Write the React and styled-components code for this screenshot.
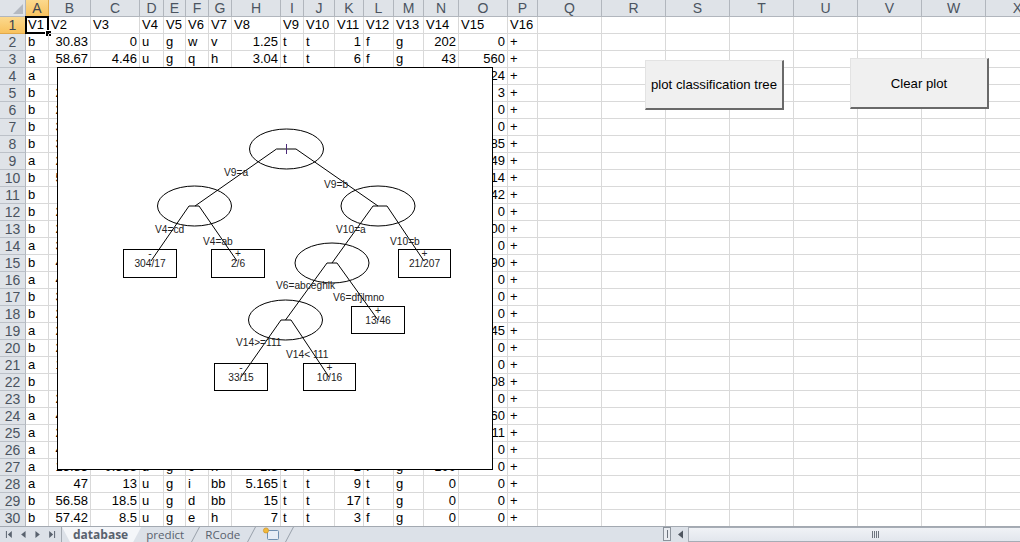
import React from "react";
import styled, { createGlobalStyle } from "styled-components";

const COLUMNS = [
  ["A", 23], ["B", 42], ["C", 49], ["D", 24], ["E", 22], ["F", 23], ["G", 23], ["H", 49],
  ["I", 23], ["J", 31], ["K", 29], ["L", 30], ["M", 30], ["N", 35], ["O", 49], ["P", 30],
  ["Q", 64], ["R", 64], ["S", 64], ["T", 64], ["U", 64], ["V", 64], ["W", 64], ["X", 64],
];

const NUMERIC = [1, 2, 7, 10, 13, 14];

const DATA = `V1,V2,V3,V4,V5,V6,V7,V8,V9,V10,V11,V12,V13,V14,V15,V16
b,30.83,0,u,g,w,v,1.25,t,t,1,f,g,202,0,+
a,58.67,4.46,u,g,q,h,3.04,t,t,6,f,g,43,560,+
a,24.5,0.5,u,g,q,h,1.5,t,f,0,f,g,280,824,+
b,27.83,1.54,u,g,w,v,3.75,t,t,5,t,g,100,3,+
b,20.17,5.625,u,g,w,v,1.71,t,f,0,f,s,120,0,+
b,32.08,4,u,g,m,v,2.5,t,f,0,t,g,360,0,+
b,33.17,1.04,u,g,r,h,6.5,t,f,0,t,g,164,31285,+
a,22.92,11.585,u,g,cc,v,0.04,t,f,0,f,g,80,1349,+
b,54.42,0.5,y,p,k,h,3.96,t,f,0,f,g,180,314,+
b,42.5,4.915,y,p,w,v,3.165,t,f,0,t,g,52,1442,+
b,22.08,0.83,u,g,c,h,2.165,f,f,0,t,g,128,0,+
b,29.92,1.835,u,g,c,h,4.335,t,f,0,f,g,260,200,+
a,38.25,6,u,g,k,v,1,t,f,0,t,g,0,0,+
b,48.08,6.04,u,g,k,v,0.04,f,f,0,f,g,0,2690,+
a,45.83,10.5,u,g,q,v,5,t,t,7,t,g,0,0,+
b,36.67,4.415,y,p,k,v,0.25,t,t,10,t,g,320,0,+
b,28.25,0.875,u,g,m,v,0.96,t,t,3,t,g,396,0,+
a,23.25,5.875,u,g,q,v,3.17,t,t,10,f,g,120,245,+
b,21.83,0.25,u,g,d,h,0.665,t,f,0,t,g,0,0,+
a,19.17,8.585,u,g,cc,h,0.75,t,t,7,f,g,96,0,+
b,25,11.25,u,g,c,v,2.5,t,t,17,f,g,200,1208,+
b,23.25,1,u,g,c,v,0.835,t,f,0,f,s,300,0,+
a,47.75,8,u,g,c,v,7.875,t,t,6,t,g,0,1260,+
a,27.42,14.5,u,g,x,h,3.085,t,t,1,f,g,120,11,+
a,41.17,6.5,u,g,q,v,0.5,t,t,3,t,g,145,0,+
a,15.83,0.585,u,g,c,h,1.5,t,t,2,f,g,100,0,+
a,47,13,u,g,i,bb,5.165,t,t,9,t,g,0,0,+
b,56.58,18.5,u,g,d,bb,15,t,t,17,t,g,0,0,+
b,57.42,8.5,u,g,e,h,7,t,t,3,f,g,0,0,+`
  .split("\n")
  .map((line) => line.split(","));

const NODES = [
  [286.5, 149],
  [194.5, 206],
  [378, 206],
  [332, 263],
  [285.5, 320],
];

const EDGES = [
  "M195 206 L276.5 149 L296 149 L378 206",
  "M151 261 L189 206 L199 206 L237 261",
  "M332 263 L373 206 L387 206 L424 261",
  "M285.5 320 L327 263 L337 263 L378 320",
  "M241 377 L281 320 L291 320 L329 377",
];

const LEAVES = [
  { x: 123.5, y: 249.5, w: 53, h: 28, sign: "-", text: "304/17" },
  { x: 211.5, y: 249.5, w: 53, h: 28, sign: "+", text: "2/6" },
  { x: 398.5, y: 249.5, w: 52, h: 28, sign: "+", text: "21/207" },
  { x: 351.5, y: 306.5, w: 53, h: 27, sign: "+", text: "13/46" },
  { x: 214.5, y: 363.5, w: 53, h: 27, sign: "-", text: "33/15" },
  { x: 303.5, y: 363.5, w: 52, h: 27, sign: "+", text: "10/16" },
];

const SPLITS = [
  { x: 224, y: 176, text: "V9=a" },
  { x: 324, y: 188, text: "V9=b" },
  { x: 155, y: 233, text: "V4=cd" },
  { x: 203, y: 245, text: "V4=ab" },
  { x: 336, y: 233, text: "V10=a" },
  { x: 390, y: 245, text: "V10=b" },
  { x: 276, y: 289, text: "V6=abceghik" },
  { x: 333, y: 301, text: "V6=dfjlmno" },
  { x: 236, y: 346, text: "V14>=111" },
  { x: 286, y: 358, text: "V14< 111" },
];

const App = () => {
  return (
    <Window>
      <GlobalStyle />
      <Sheet>
        <Corner>
          <svg width="12" height="12" viewBox="0 0 12 12">
            <path d="M11 1 V11 H1 Z" fill="#b4b9c1" />
          </svg>
        </Corner>
        {COLUMNS.map(([name], i) => (
          <ColHeader key={name} $active={i === 0}>
            {name}
          </ColHeader>
        ))}
        {DATA.map((row, r) => (
          <React.Fragment key={r}>
            <RowHeader $active={r === 0}>{r + 1}</RowHeader>
            {COLUMNS.map(([name], c) => (
              <Cell key={name} $right={r > 0 && NUMERIC.includes(c)}>
                {row[c]}
                {r === 0 && c === 0 && <Selection />}
              </Cell>
            ))}
          </React.Fragment>
        ))}

        <Plot>
          <svg width="434" height="401" viewBox="58 68 434 401">
            <g fill="none" stroke="#000" strokeWidth="1">
              {NODES.map(([cx, cy]) => (
                <ellipse key={cx + "-" + cy} cx={cx} cy={cy} rx="37" ry="20" />
              ))}
              {EDGES.map((d) => (
                <path key={d} d={d} />
              ))}
              {LEAVES.map((l) => (
                <rect key={l.text} x={l.x} y={l.y} width={l.w} height={l.h} />
              ))}
              <path d="M286.5 144 V154" stroke="#4b2a78" />
            </g>
            <PlotText>
              {SPLITS.map((s) => (
                <text key={s.text} x={s.x} y={s.y}>
                  {s.text}
                </text>
              ))}
              {LEAVES.map((l) => (
                <g key={l.text} textAnchor="middle">
                  <text x={l.x + l.w / 2} y={l.y + 7.5}>
                    {l.sign}
                  </text>
                  <text x={l.x + l.w / 2} y={l.y + 17.5}>
                    {l.text}
                  </text>
                </g>
              ))}
            </PlotText>
          </svg>
        </Plot>

        <SheetButton $left={645} $top={60} $width={139} $height={50}>
          plot classification tree
        </SheetButton>
        <SheetButton $left={850} $top={58} $width={139} $height={51}>
          Clear plot
        </SheetButton>
      </Sheet>

      <StatusBar>
        <TabNav>
          <svg width="62" height="15" viewBox="0 0 62 15" fill="#59626e">
            <path d="M6 4 H7 V11 H6 Z M12 4 V11 L8 7.5 Z" />
            <path d="M26 4 V11 L21.5 7.5 Z" />
            <path d="M36 4 V11 L40.5 7.5 Z" />
            <path d="M50 4 V11 L54 7.5 Z M55 4 H56 V11 H55 Z" />
          </svg>
        </TabNav>
        <ActiveTab>database</ActiveTab>
        <Tab>predict</Tab>
        <Tab>RCode</Tab>
        <NewTab>
          <svg width="20" height="15" viewBox="0 0 20 15">
            <rect x="6.5" y="3.5" width="11" height="9" rx="1" fill="#e6edf6" stroke="#6f8fb0" />
            <circle cx="5" cy="3.5" r="2.6" fill="#f0b93c" stroke="#c98a1c" strokeWidth="0.6" />
          </svg>
        </NewTab>
        <Spacer />
        <SplitHandle />
        <ScrollArrow>
          <svg width="8" height="9" viewBox="0 0 8 9">
            <path d="M6 0.5 V8.5 L1 4.5 Z" fill="#4f5660" />
          </svg>
        </ScrollArrow>
        <ScrollThumb>
          <Grip />
        </ScrollThumb>
      </StatusBar>
    </Window>
  );
};

const GlobalStyle = createGlobalStyle`
  html, body {
    margin: 0;
    padding: 0;
    background: #fff;
  }
`;

const Window = styled.div`
  width: 1020px;
  height: 542px;
  overflow: hidden;
  display: flex;
  flex-direction: column;
  font-family: "Liberation Sans", Arial, sans-serif;
`;

const Sheet = styled.div`
  position: relative;
  height: 526px;
  overflow: hidden;
  display: grid;
  grid-template-columns: 26px ${COLUMNS.map(([, w]) => w + "px").join(" ")};
  grid-auto-rows: 17px;
  align-content: start;
`;

const Corner = styled.div`
  background: #dfe3e8;
  border-right: 1px solid #b1b6bd;
  border-bottom: 1px solid #b1b6bd;
  display: flex;
  align-items: flex-end;
  justify-content: flex-end;
  box-sizing: border-box;
  padding: 0 1px 1px 0;
`;

const ColHeader = styled.div`
  box-sizing: border-box;
  border-right: 1px solid ${(p) => (p.$active ? "#e1a94a" : "#b1b6bd")};
  border-bottom: 1px solid ${(p) => (p.$active ? "#e1a94a" : "#b1b6bd")};
  background: ${(p) =>
    p.$active ? "linear-gradient(#fbd98e, #f8c25e)" : "#dfe3e8"};
  color: ${(p) => (p.$active ? "#3f4650" : "#4b5460")};
  font-size: 14px;
  line-height: 16px;
  text-align: center;
`;

const RowHeader = styled.div`
  box-sizing: border-box;
  border-right: 1px solid ${(p) => (p.$active ? "#e1a94a" : "#b1b6bd")};
  border-bottom: 1px solid ${(p) => (p.$active ? "#e1a94a" : "#bcc1c8")};
  background: ${(p) =>
    p.$active ? "linear-gradient(#fbd98e, #f8c25e)" : "#dfe3e8"};
  color: ${(p) => (p.$active ? "#3f4650" : "#4b5460")};
  font-size: 14px;
  line-height: 17px;
  text-align: center;
`;

const Cell = styled.div`
  position: relative;
  box-sizing: border-box;
  border-right: 1px solid #d9d9d9;
  border-bottom: 1px solid #d9d9d9;
  padding: 0 2px;
  color: #000;
  font-size: 13px;
  line-height: 16px;
  white-space: nowrap;
  text-align: ${(p) => (p.$right ? "right" : "left")};
`;

const Selection = styled.span`
  position: absolute;
  left: -1px;
  top: -1px;
  width: 20px;
  height: 14px;
  border: 2px solid #000;
  pointer-events: none;

  &::after {
    content: "";
    position: absolute;
    right: -4px;
    bottom: -4px;
    width: 5px;
    height: 5px;
    background: #000;
    border-left: 1px solid #fff;
    border-top: 1px solid #fff;
  }
`;

const Plot = styled.div`
  position: absolute;
  left: 57px;
  top: 67px;
  width: 434px;
  height: 401px;
  background: #fff;
  border: 1.5px solid #000;
  display: flex;
`;

const PlotText = styled.g`
  font-family: "Liberation Sans", Arial, sans-serif;
  font-size: 10.2px;
  fill: #222;
`;

const SheetButton = styled.div`
  position: absolute;
  left: ${(p) => p.$left}px;
  top: ${(p) => p.$top}px;
  width: ${(p) => p.$width}px;
  height: ${(p) => p.$height}px;
  box-sizing: border-box;
  display: flex;
  align-items: center;
  justify-content: center;
  background: #f0f0f0;
  border-style: solid;
  border-width: 1px 2px 2px 1px;
  border-color: #e3e3e3 #696969 #696969 #e3e3e3;
  color: #000;
  font-size: 13.2px;
`;

const StatusBar = styled.div`
  height: 16px;
  flex: none;
  display: flex;
  align-items: stretch;
  background: #dce1e8;
  border-top: 1px solid #a3a9b1;
  box-sizing: border-box;
  color: #4b5460;
`;

const TabNav = styled.div`
  width: 62px;
  flex: none;
  box-sizing: border-box;
  border-right: 1px solid #a3a9b1;
  display: flex;
`;

const Tab = styled.div`
  position: relative;
  flex: none;
  height: 15px;
  margin-left: -8px;
  padding: 0 16px 0 13px;
  font-family: "Open Sans", "Liberation Sans", sans-serif;
  font-size: 11.6px;
  line-height: 15px;
  color: #59626e;

  &::after {
    content: "";
    position: absolute;
    right: 4px;
    top: 0;
    width: 1px;
    height: 15px;
    background: #98a0aa;
    transform: skewX(-28deg);
  }
`;

const ActiveTab = styled.div`
  flex: none;
  height: 15px;
  padding: 0 13px 0 11px;
  background: #f4f6f9;
  clip-path: polygon(0 0, 100% 0, calc(100% - 8px) 100%, 8px 100%);
  font-family: "Open Sans", "Liberation Sans", sans-serif;
  font-weight: 700;
  font-size: 12px;
  line-height: 15px;
  color: #59626e;
`;

const NewTab = styled.div`
  position: relative;
  flex: none;
  width: 46px;
  height: 15px;
  margin-left: -8px;
  padding-left: 13px;
  box-sizing: border-box;
  display: flex;

  &::after {
    content: "";
    position: absolute;
    right: 4px;
    top: 0;
    width: 1px;
    height: 15px;
    background: #98a0aa;
    transform: skewX(-28deg);
  }
`;

const Spacer = styled.div`
  flex: 1;
`;

const SplitHandle = styled.div`
  width: 8px;
  height: 14px;
  margin: 0 3px 0 0;
  background: linear-gradient(#6d747e, #6d747e) center / 1px 8px no-repeat, #e9ecf1;
  border: 1px solid #8c939c;
  box-sizing: border-box;
  flex: none;
`;

const ScrollArrow = styled.div`
  width: 14px;
  flex: none;
  display: flex;
  align-items: center;
  justify-content: center;
`;

const ScrollThumb = styled.div`
  width: 332px;
  height: 15px;
  flex: none;
  box-sizing: border-box;
  border: 1px solid #a6acb5;
  border-right: none;
  background: linear-gradient(#f0f2f6, #e2e6ed);
  display: flex;
  align-items: center;
  padding-left: 183px;
`;

const Grip = styled.div`
  width: 8px;
  height: 7px;
  background: repeating-linear-gradient(90deg, #6d747e 0 1px, transparent 1px 2px);
`;

export default App;
